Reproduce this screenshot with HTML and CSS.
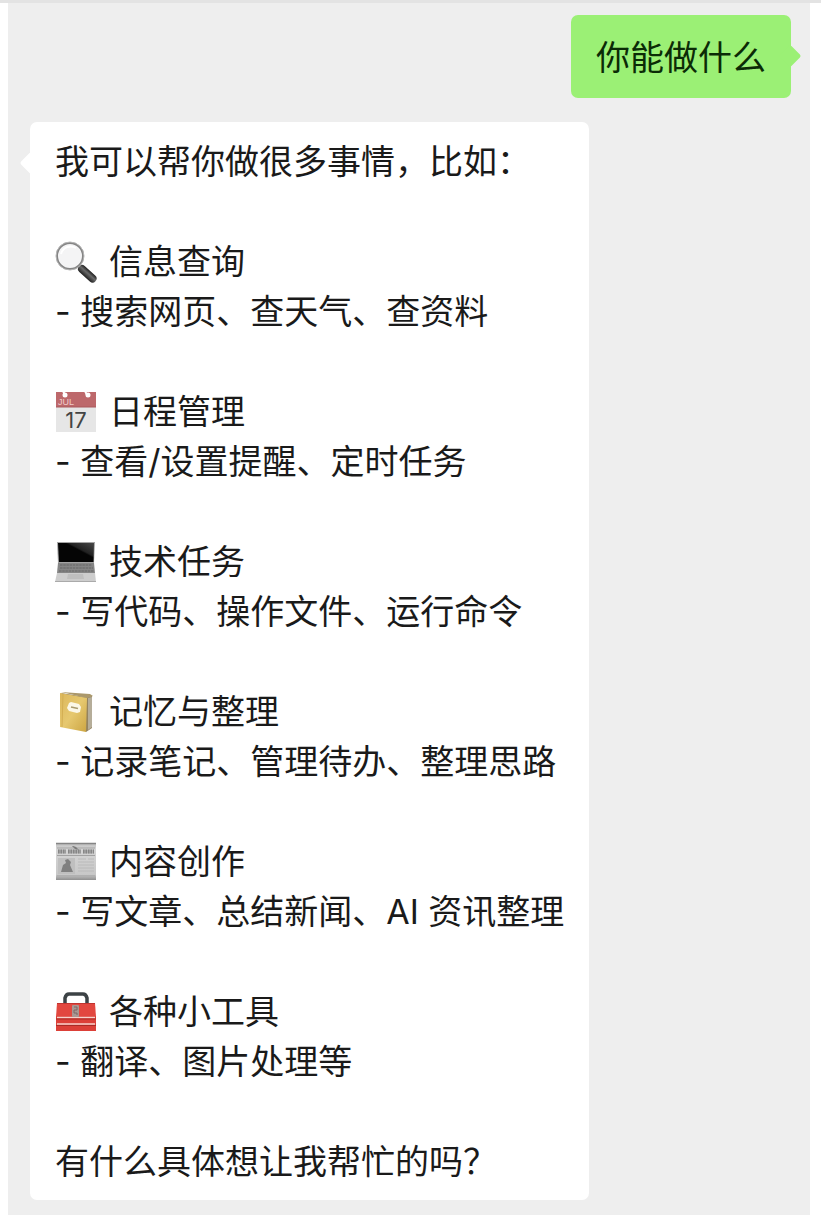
FILE: index.html
```
<!DOCTYPE html>
<html lang="zh-CN">
<head>
    <meta charset="UTF-8">
    <meta name="viewport" content="width=device-width, initial-scale=1.0">
    <title>聊天</title>
    <link rel="stylesheet" href="styles.css">
</head>
<body>
    <div class="top-line"></div>
    <main class="chat">
        <div class="bubble sent">你能做什么</div>

        <div class="bubble received">
            <p>我可以帮你做很多事情，比如：</p>

            <section class="skill">
                <h2>
                    <svg class="icon" viewBox="0 0 42 42" aria-hidden="true">
                        <defs>
                            <linearGradient id="handle" x1="0" y1="1" x2="1" y2="0">
                                <stop offset="0.2" stop-color="#1d1d1d"/>
                                <stop offset="0.55" stop-color="#6a6a6a"/>
                                <stop offset="0.8" stop-color="#1a1a1a"/>
                            </linearGradient>
                        </defs>
                        <path d="M23 24l4 4" stroke="#8c8c8c" stroke-width="4"/>
                        <path d="M27 28l10.500 9.500" stroke="url(#handle)" stroke-width="8" stroke-linecap="round"/>
                        <circle cx="15" cy="15" r="13" fill="#f4f4f5" stroke="#858585" stroke-width="2"/>
                        <circle cx="15" cy="15" r="14" fill="none" stroke="#b5b5b5" stroke-width="1"/>
                        <path d="M6 13a10 10 0 0 1 15-6" fill="none" stroke="#fff" stroke-width="2"/>
                    </svg>
                    信息查询
                </h2>
                <p>- 搜索网页、查天气、查资料</p>
            </section>

            <section class="skill">
                <h2>
                    <svg class="icon" viewBox="0 0 42 42" aria-hidden="true">
                        <rect x="1" y="1" width="40" height="40" fill="#e6e6e6"/>
                        <rect x="1" y="1" width="40" height="15" fill="#bd686b"/>
                        <path d="M1 16h40" stroke="#a9585c" stroke-width="1"/>
                        <path d="M8 0l2 4M30 0l2 4" stroke="#fff" stroke-width="2"/>
                        <circle cx="10" cy="4" r="2.500" fill="#fff"/>
                        <circle cx="33" cy="4" r="2.500" fill="#fff"/>
                        <text x="3" y="14" class="cal-month">JUL</text>
                        <text x="21" y="37" class="cal-day">17</text>
                    </svg>
                    日程管理
                </h2>
                <p>- 查看/设置提醒、定时任务</p>
            </section>

            <section class="skill">
                <h2>
                    <svg class="icon" viewBox="0 0 42 42" aria-hidden="true">
                        <defs>
                            <linearGradient id="shine" x1="0" y1="1" x2="1" y2="0">
                                <stop offset="0.6" stop-color="#050505"/>
                                <stop offset="0.65" stop-color="#222"/>
                                <stop offset="1" stop-color="#484848"/>
                            </linearGradient>
                        </defs>
                        <path d="M2 1h38l-1 21H3z" fill="#a4a4a4"/>
                        <path d="M3 2h36l-.5 19H4z" fill="url(#shine)"/>
                        <path d="M3 22h36l1 10H2z" fill="#858585"/>
                        <path d="M5 24h32M5 27h33M4 30h35" stroke="#666" stroke-width="1.200" stroke-dasharray="2.500 .7"/>
                        <path d="M2 32h38l1 9H0z" fill="#cdcdcd"/>
                        <path d="M13 33h15l1 5H12z" fill="#bfbfbf"/>
                        <path d="M0 40.500h41" stroke="#aaa" stroke-width="1"/>
                    </svg>
                    技术任务
                </h2>
                <p>- 写代码、操作文件、运行命令</p>
            </section>

            <section class="skill">
                <h2>
                    <svg class="icon" viewBox="0 0 42 42" aria-hidden="true">
                        <defs>
                            <linearGradient id="cover" x1="0" y1="0" x2="1" y2="1">
                                <stop offset="0" stop-color="#dcb75c"/>
                                <stop offset="0.5" stop-color="#e6c86f"/>
                                <stop offset="1" stop-color="#cca542"/>
                            </linearGradient>
                        </defs>
                        <path d="M6 2l25 4 6-1v32l-6 4z" fill="#94835f"/>
                        <path d="M6 1l29 2 3 2-6 2z" fill="#ab986b"/>
                        <path d="M33 7l4-1v30l-4 3z" fill="#b5ad99"/>
                        <path d="M5 2l27 5-1 34-26-5z" fill="url(#cover)"/>
                        <path d="M8 3l-1 33" stroke="#d3ae52" stroke-width="1"/>
                        <path d="M14 12l2-1 8 2 2 3-1 5-3 1-8-2-2-3z" fill="#fbf7e8"/>
                        <path d="M16 16l7 1.500" stroke="#a89a6e" stroke-width="1.500"/>
                    </svg>
                    记忆与整理
                </h2>
                <p>- 记录笔记、管理待办、整理思路</p>
            </section>

            <section class="skill">
                <h2>
                    <svg class="icon" viewBox="0 0 42 42" aria-hidden="true">
                        <defs>
                            <linearGradient id="paper" x1="0" y1="0" x2="0" y2="1">
                                <stop offset="0" stop-color="#bbb"/>
                                <stop offset="0.15" stop-color="#d5d5d5"/>
                                <stop offset="0.85" stop-color="#c8c8c8"/>
                                <stop offset="1" stop-color="#8f8f8f"/>
                            </linearGradient>
                        </defs>
                        <rect x="1" y="2" width="40" height="37" fill="url(#paper)"/>
                        <path d="M1 2.500h40" stroke="#858585" stroke-width="1.500"/>
                        <path d="M17 5l4 1 3 3-4-1z" fill="#555"/>
                        <path d="M3 10.500h8M13 10.500h13M28 10.500h11" stroke="#b0b0b0" stroke-width="4"/>
                        <path d="M3 10.500h8M13 10.500h13M28 10.500h11" stroke="#868686" stroke-width="4" stroke-dasharray="1.500 1"/>
                        <path d="M2 7h38M2 14.500h38" stroke="#a2a2a2" stroke-width="1"/>
                        <rect x="3" y="17" width="17" height="16" fill="#bfbfbf"/>
                        <path d="M6 31l2-7 3-2-1-3 3-1 3 3-1 3 3 7z" fill="#808080"/>
                        <path d="M23 18h8M33 18h6M23 21h16M23 24h16M23 27h16M23 30h16" stroke="#bababa" stroke-width="1"/>
                        <path d="M2 35h38" stroke="#b0b0b0" stroke-width="2"/>
                    </svg>
                    内容创作
                </h2>
                <p>- 写文章、总结新闻、AI 资讯整理</p>
            </section>

            <section class="skill">
                <h2>
                    <svg class="icon" viewBox="0 0 42 42" aria-hidden="true">
                        <path d="M10 13V7q1-4 4-4h14q3 0 4 4v6" fill="none" stroke="#3c4245" stroke-width="3.500"/>
                        <path d="M2 12h38l1 14H1z" fill="#e2473f"/>
                        <path d="M2 12.500h38" stroke="#c0342f" stroke-width="1"/>
                        <rect x="1" y="25" width="40" height="15" fill="#dc4038"/>
                        <path d="M2 26.500h38M2 33h38" stroke="#f6d2cc" stroke-width="1.500"/>
                        <path d="M1 28h40M1 34.500h40" stroke="#a92c27" stroke-width="1"/>
                        <rect x="17" y="14" width="7" height="12" rx="1" fill="#a99793"/>
                        <path d="M19 16h3v3h-3v3h3v2" fill="none" stroke="#7c6966" stroke-width="1"/>
                    </svg>
                    各种小工具
                </h2>
                <p>- 翻译、图片处理等</p>
            </section>

            <p>有什么具体想让我帮忙的吗？</p>
        </div>
    </main>
</body>
</html>
```
FILE: styles.css
```
* {
    box-sizing: border-box;
}
body {
    margin: 0;
    background: #fff;
    color: #1a1a1a;
    font-family: Inter, "Noto Sans CJK SC", sans-serif;
    font-size: 34px;
    line-height: 50px;
}
.top-line {
    height: 3px;
    background: #e3e3e3;
}
.chat {
    display: flex;
    flex-direction: column;
    gap: 24px;
    min-height: calc(100vh - 3px);
    margin: 0 11px 0 8px;
    padding: 12px 19px 15px 22px;
    background: #eee;
}
.bubble {
    position: relative;
    max-width: 100%;
    padding: 15px 25px 13px;
    border-radius: 7px;
}
/* little arrow on the side of the bubble */
.bubble::before {
    content: "";
    position: absolute;
    top: 33px;
    width: 16px;
    height: 16px;
    border-radius: 2px;
    transform: rotate(45deg);
}
.sent {
    align-self: flex-end;
    padding: 18px 25px 15px;
    background: #9bf075;
    color: #0b2b06;
}
.sent::before {
    right: -7px;
    background: #9bf075;
}
.received {
    align-self: flex-start;
    background: #fff;
}
.received::before {
    left: -7px;
    background: #fff;
}
.bubble p,
.bubble h2 {
    margin: 0;
    font-size: 34px;
    font-weight: 400;
}
.bubble h2 {
    display: flex;
    align-items: center;
    gap: 12px;
}
.skill {
    margin: 50px 0;
}
.icon {
    flex: none;
    width: 42px;
    height: 42px;
    overflow: visible;
}
.cal-month {
    fill: #f0cccc;
    font-family: "Liberation Sans", sans-serif;
    font-size: 9px;
}
.cal-day {
    fill: #444;
    font-family: Inter, sans-serif;
    font-size: 22px;
    text-anchor: middle;
}
```
